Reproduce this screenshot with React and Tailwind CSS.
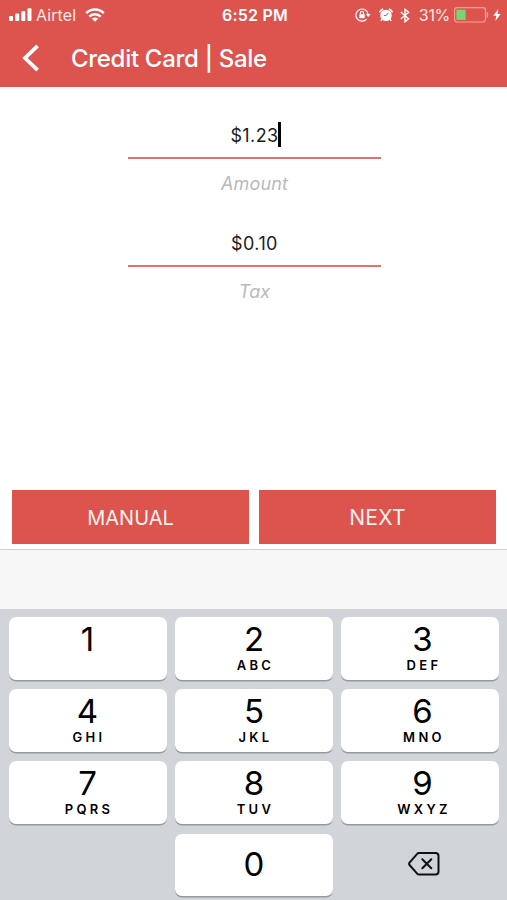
const keys = [
  { digit: '1', letters: '' },
  { digit: '2', letters: 'ABC' },
  { digit: '3', letters: 'DEF' },
  { digit: '4', letters: 'GHI' },
  { digit: '5', letters: 'JKL' },
  { digit: '6', letters: 'MNO' },
  { digit: '7', letters: 'PQRS' },
  { digit: '8', letters: 'TUV' },
  { digit: '9', letters: 'WXYZ' },
]

// outer columns sit slightly right/left of centre
const columnShift = ['pr-[1px]', '', 'pl-[5px]']

function SignalIcon() {
  return (
    <svg width="23" height="14" viewBox="0 0 23 14" fill="currentColor">
      <rect x="0" y="8" width="4" height="5" rx="1" />
      <rect x="6.2" y="5.5" width="4" height="7.5" rx="1" />
      <rect x="12.3" y="3" width="4" height="10" rx="1" />
      <rect x="18.5" y="0.3" width="4" height="12.7" rx="1" />
    </svg>
  )
}

function WifiIcon() {
  return (
    <svg width="20" height="14" viewBox="0 0 20 14" fill="none" stroke="currentColor" strokeWidth="2.5">
      <path d="M1.2 5.1 A12.5 12.5 0 0 1 18.8 5.1" />
      <path d="M4.3 8.6 A8 8 0 0 1 15.7 8.6" />
      <path d="M10 13.8 L6.9 10.8 A4.4 4.4 0 0 1 13.1 10.8 Z" fill="currentColor" stroke="none" />
    </svg>
  )
}

function RotationLockIcon() {
  return (
    <svg width="16" height="14" viewBox="0 0 16 14" fill="none" stroke="currentColor" strokeWidth="1.2">
      <path d="M11.6 11.2 A6.1 6.1 0 1 1 13.1 6.2" />
      <path d="M10.8 6 H15.6 L13.2 9 Z" fill="currentColor" stroke="none" />
      <rect x="4.3" y="6.2" width="5.4" height="4" rx="0.5" fill="currentColor" stroke="none" />
      <path d="M5.4 6.5 V5 A1.6 1.6 0 0 1 8.6 5 V6.5" />
    </svg>
  )
}

function AlarmIcon() {
  return (
    <svg width="14" height="14" viewBox="0 0 14 14" fill="none">
      <circle cx="7" cy="7.4" r="5.7" fill="currentColor" />
      <path d="M0.9 3.7 A8 8 0 0 1 3.5 1.2 M13.1 3.7 A8 8 0 0 0 10.5 1.2" stroke="currentColor" strokeWidth="1.7" strokeLinecap="round" />
      <path d="M3 11.2 L1.9 12.9 M11 11.2 L12.1 12.9" stroke="currentColor" strokeWidth="1.5" />
      <path d="M9.2 4.9 L7.2 7.6 L4.8 7.4" stroke="#dd534d" strokeWidth="1" />
    </svg>
  )
}

function BluetoothIcon() {
  return (
    <svg width="10" height="15" viewBox="0 0 10 15" fill="none" stroke="currentColor" strokeWidth="1.4">
      <path d="M0.8 4 L8.6 10.7 L5 13.7 V1.3 L8.6 4.3 L0.8 11" />
    </svg>
  )
}

function BatteryIcon() {
  return (
    <svg width="35" height="16" viewBox="0 0 35 16" fill="none">
      <rect x="0.6" y="0.6" width="30.8" height="14.4" rx="2.5" stroke="#f3a69d" strokeWidth="1.1" />
      <path d="M33 5 Q34.6 7.8 33 10.6 Z" fill="#f3a69d" stroke="#f3a69d" strokeWidth="0.7" />
      <rect x="2.4" y="2.7" width="9.2" height="10.2" fill="#78d672" />
    </svg>
  )
}

function BoltIcon() {
  return (
    <svg width="8" height="12" viewBox="0 0 8 12" fill="currentColor">
      <path d="M5.3 0 L0.3 6.8 H3.3 L2.4 12 L7.7 4.9 H4.6 Z" />
    </svg>
  )
}

function BackspaceIcon() {
  return (
    <svg width="32" height="24" viewBox="0 0 32 24" fill="none" stroke="#101113" strokeWidth="2" strokeLinejoin="round">
      <path d="M11 1 H27.5 Q30.5 1 30.5 4 V19.5 Q30.5 22.5 27.5 22.5 H11 Q10 22.5 9.2 21.7 L1.5 13 Q0.7 11.8 1.5 10.6 L9.2 1.8 Q10 1 11 1 Z" />
      <path d="M14.3 7.2 L23.3 16.3 M23.3 7.2 L14.3 16.3" strokeLinecap="round" />
    </svg>
  )
}

function StatusBar() {
  return (
    <div className="grid grid-cols-[1fr_auto_1fr] items-center h-[30px] pl-[9px] pr-[6px]">
      <div className="flex items-center">
        <SignalIcon />
        <span className="ml-[4px] w-[40px] text-base tracking-[0.1px] text-[#ffe9e6] whitespace-nowrap">Airtel</span>
        <span className="ml-[9px]"><WifiIcon /></span>
      </div>
      <span className="text-base font-semibold tracking-[0.2px]">6:52 PM</span>
      <div className="flex items-center justify-end">
        <RotationLockIcon />
        <span className="ml-[8px]"><AlarmIcon /></span>
        <span className="ml-[7px]"><BluetoothIcon /></span>
        <span className="ml-[9px] text-base tracking-[-0.3px] text-[#ffe9e6]">31%</span>
        <span className="ml-[4px]"><BatteryIcon /></span>
        <span className="ml-[4px]"><BoltIcon /></span>
      </div>
    </div>
  )
}

function Field({ label, value, focused }) {
  return (
    <div className="w-[253px] h-[108px] text-center">
      <div className="flex items-center justify-center h-[48px] pt-[4px] border-b-2 border-[#df7370] text-lg text-[#1c1c1c]">
        <span className="relative tracking-[0.4px]">
          {value}
          {focused && <span className="absolute -right-[2px] top-0 w-[3px] h-[25px] bg-black" />}
        </span>
      </div>
      <div className="pt-[11px] text-lg italic tracking-[0.1px] text-[#b9b9b9]">{label}</div>
    </div>
  )
}

function Key({ digit, letters, shift }) {
  return (
    <button className={`flex flex-col items-center h-[63px] rounded-[7px] bg-white shadow-[0_1.5px_0_#95989c] ${shift}`}>
      <span className="mt-[3px] text-[33px] leading-[38px]">{digit}</span>
      <span className="pl-[3px] text-[13px] leading-[15px] font-semibold tracking-[3.3px]">{letters}</span>
    </button>
  )
}

export default function App() {
  return (
    <div className="flex flex-col w-[507px] h-[900px] overflow-hidden bg-white font-['Inter','Liberation_Sans',sans-serif]">
      {/* Header */}
      <header className="h-[87px] bg-[#dd534d] text-white">
        <StatusBar />
        <div className="flex items-center h-[56px] pl-[22px]">
          <svg width="18" height="28" viewBox="0 0 18 28" fill="none" stroke="currentColor" strokeWidth="3.8">
            <path d="M15.6 1.8 L3 14 L15.6 26.2" />
          </svg>
          <h1 className="ml-[31px] pt-[1px] text-2xl font-medium tracking-[-0.3px]">Credit Card | Sale</h1>
        </div>
      </header>

      {/* Form */}
      <main className="flex-1 flex flex-col items-center pt-[24px] pl-[2px]">
        <Field label="Amount" value="$1.23" focused />
        <Field label="Tax" value="$0.10" />
      </main>

      {/* Actions */}
      <div className="grid grid-cols-2 gap-[10px] pl-[12px] pr-[11px] pb-[5px]">
        <button className="h-[54px] pt-px bg-[#dd534d] text-xl text-[#fff1ee]">MANUAL</button>
        <button className="h-[54px] pt-px bg-[#dd534d] text-[21px] tracking-[0.3px] text-[#fff1ee]">NEXT</button>
      </div>

      {/* Keyboard */}
      <div className="h-[60px] border-t border-[#cfd1d2] bg-[#f7f7f7]" />
      <div className="h-[291px] pt-[7.5px] pl-[9px] pr-[8px] bg-[#d1d4d9] text-black">
        <div className="grid grid-cols-3 gap-x-[8px] gap-y-[9.4px]">
          {keys.map((key, i) => <Key key={key.digit} {...key} shift={columnShift[i % 3]} />)}
          <div />
          <button className="h-[62px] pb-[1px] rounded-[7px] bg-white text-[33px] leading-[59px] shadow-[0_1.5px_0_#95989c]">0</button>
          <button className="flex items-center justify-center pl-[7px] pb-[2px]"><BackspaceIcon /></button>
        </div>
      </div>
    </div>
  )
}
